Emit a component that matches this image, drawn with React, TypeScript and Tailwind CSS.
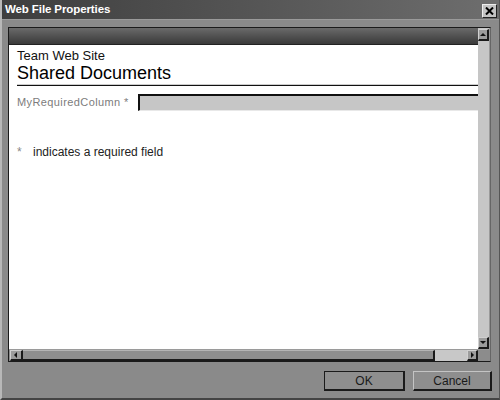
import React from "react";

const font = { fontFamily: '"Liberation Sans", Arial, sans-serif' };

function Tri({ dir }: { dir: "up" | "down" | "left" | "right" }) {
  const pts =
    dir === "up"
      ? "1,5 4,2 7,5"
      : dir === "down"
      ? "1,2 4,5 7,2"
      : dir === "left"
      ? "5,1 2,4 5,7"
      : "3,1 6,4 3,7";
  return (
    <svg width="8" height="8" viewBox="0 0 8 8">
      <polygon points={pts} fill="#111" />
    </svg>
  );
}

function ScrollBtn({ dir, className }: { dir: "up" | "down" | "left" | "right"; className: string }) {
  return (
    <div
      className={
        "flex items-center justify-center bg-[#9c9c9c] border-t border-l border-t-[#d0d0d0] border-l-[#d0d0d0] border-b-2 border-r-2 border-b-[#1a1a1a] border-r-[#1a1a1a] " +
        className
      }
    >
      <Tri dir={dir} />
    </div>
  );
}

export default function App() {
  return (
    <div
      className="w-[500px] h-[400px] bg-[#8a8a8a] flex flex-col overflow-hidden border-l-2 border-l-[#b8b8b8] border-b-2 border-b-[#444] border-r border-r-[#555]"
      style={font}
    >
      {/* Title bar */}
      <div className="h-[20px] shrink-0 flex items-center justify-between pl-[3px] pr-[2px] bg-gradient-to-r from-[#3e3e3e] via-[#555] to-[#6e6e6e] border-b border-b-[#9a9a9a]">
        <span className="text-white text-[11.5px] font-bold leading-[13px] tracking-[-0.1px]">Web File Properties</span>
        <div className="w-[15px] h-[14px] mt-[2px] bg-[#c4c4c4] border-t border-l border-t-[#eee] border-l-[#eee] border-b border-r border-b-[#222] border-r-[#222] flex items-center justify-center">
          <svg width="9" height="8" viewBox="0 0 9 8">
            <path d="M1 0.5 L8 7.5 M8 0.5 L1 7.5" stroke="#000" strokeWidth="2" />
          </svg>
        </div>
      </div>

      {/* Inner frame */}
      <div className="mt-[7px] ml-[6px] mr-[8px] h-[335px] shrink-0 border border-[#1a1a1a] border-r-[#666] flex flex-col">
        <div className="flex flex-1 min-h-0">
          <div className="flex-1 flex flex-col min-w-0">
            <div className="h-[17px] shrink-0 bg-gradient-to-b from-[#6a6a6a] to-[#3a3a3a] border-b border-b-[#222]" />
            <div className="flex-1 bg-white pl-[8px] pt-[4px] flex flex-col">
              <div className="text-[13px] leading-[14px] text-[#111]">Team Web Site</div>
              <div className="text-[18px] leading-[20px] text-black">Shared Documents</div>
              <div className="mt-[1px] h-px bg-[#ccc]" />
              <div className="h-px bg-[#111]" />
              <div className="mt-[8px] flex items-center">
                <span className="text-[11px] leading-[17px] text-[#7c7c7c] tracking-[0.4px] w-[121px] shrink-0">MyRequiredColumn *</span>
                <div className="flex-1 h-[17px] bg-[#c6c6c6] border-t-2 border-l-2 border-t-[#111] border-l-[#111] border-b border-b-[#e8e8e8]" />
              </div>
              <div className="mt-[34px] text-[12px] leading-[14px] text-[#222] flex">
                <span className="text-[#888] w-[16px]">*</span>
                <span>indicates a required field</span>
              </div>
            </div>
          </div>
          {/* vertical scrollbar */}
          <div className="w-[12px] shrink-0 flex flex-col bg-[#c6c6c6] border-r border-r-[#9a9a9a]">
            <ScrollBtn dir="up" className="h-[12px] mt-[1px]" />
            <div className="flex-1" />
            <ScrollBtn dir="down" className="h-[12px]" />
          </div>
        </div>
        {/* horizontal scrollbar row */}
        <div className="h-[12px] shrink-0 flex bg-[#8c8c8c] border-t border-t-[#9a9a9a]">
          <div className="flex-1 flex">
            <ScrollBtn dir="left" className="w-[13px] ml-[1px]" />
            <div className="w-[412px] bg-[#8e8e8e] border-t border-t-[#b4b4b4] border-b-2 border-b-[#1a1a1a] border-r-2 border-r-[#1a1a1a]" />
            <div className="flex-1 bg-[#c8c8c8]" />
            <ScrollBtn dir="right" className="w-[11px]" />
          </div>
          <div className="w-[12px] bg-[#8c8c8c]" />
        </div>
      </div>

      {/* Buttons */}
      <div className="flex justify-end gap-[8px] pr-[7px] mt-[9px]">
        <div className="w-[81px] h-[20px] bg-[#8e8e8e] border border-[#1a1a1a] border-b-2 border-r-2 flex items-center justify-center text-[12px] text-[#1a1a1a]">
          OK
        </div>
        <div className="w-[79px] h-[20px] bg-[#8e8e8e] border-t border-l border-t-[#c4c4c4] border-l-[#c4c4c4] border-b-2 border-r-2 border-b-[#1a1a1a] border-r-[#1a1a1a] flex items-center justify-center text-[12px] text-[#1a1a1a]">
          Cancel
        </div>
      </div>
    </div>
  );
}
